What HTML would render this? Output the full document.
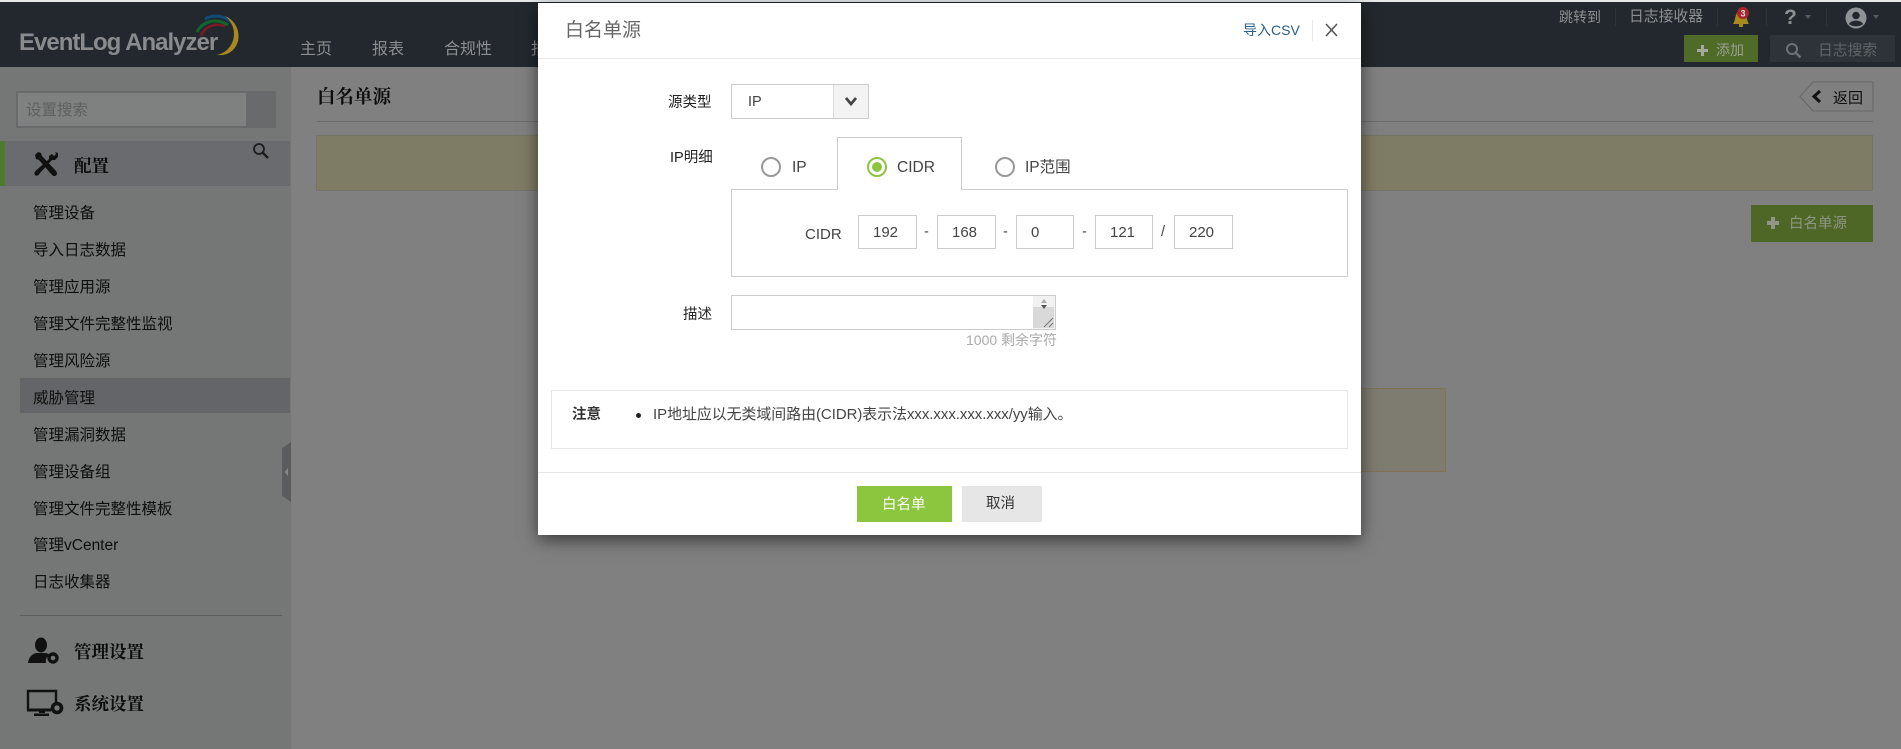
<!DOCTYPE html>
<html><head><meta charset="utf-8"><style>
html,body{margin:0;padding:0;width:1901px;height:749px;overflow:hidden;background:#808080}
*{box-sizing:border-box}
body{font-family:"Liberation Sans","WenQuanYi Zen Hei","Noto Sans CJK SC",sans-serif;font-size:15px;color:#111}
.a{position:absolute}
.t{position:absolute;white-space:nowrap;line-height:20px;height:20px}
.side{font-size:15.5px;color:#0e0e0e;left:33px}
.nav{font-size:16px;color:#8c8f91;top:40px}
.b{font-weight:bold;font-family:"Liberation Serif","Noto Serif CJK SC",serif}
.in{position:absolute;top:215px;height:34px;border:1px solid #ccc;background:#fff;font-size:15px;line-height:34px;padding-left:14px;color:#444}
.sep{position:absolute;width:1px;background:#2e3439}
.m{position:absolute;color:#444;font-size:14.5px;white-space:nowrap;line-height:20px}
.radio{position:absolute;width:20px;height:20px;border:2px solid #999;border-radius:50%;background:#fff;top:157px}
</style></head><body>
<div class="a" style="left:0;top:0;width:1901px;height:2px;background:#e6e8ea"></div>
<div class="a" style="left:0;top:2px;width:1901px;height:65px;background:#22282d"></div>
<div class="a" style="left:0;top:67px;width:291px;height:682px;background:#747776"></div>

<!-- logo -->
<div class="t" style="left:19px;top:28px;height:30px;line-height:30px;font-size:24px;font-weight:bold;color:#898b8d;letter-spacing:-1px">EventLog Analyzer</div>
<svg class="a" style="left:195px;top:12px" width="50" height="48" viewBox="0 0 50 48" fill="none">
<path d="M6 24 C9 16 18 10 30 14" stroke="#7d1a22" stroke-width="2.5"/>
<path d="M2 20 C7 10 20 5 33 13" stroke="#10652f" stroke-width="3"/>
<path d="M10 7 C18 2 31 3 38 12" stroke="#124a78" stroke-width="3"/>
<path d="M30 4 C42 9 46 22 42 32 C38 41 30 44 22 43 C32 41 39 32 39 22 C39 14 35 8 30 4Z" fill="#a8891f"/>
</svg>

<div class="t nav" style="left:300px">主页</div>
<div class="t nav" style="left:372px">报表</div>
<div class="t nav" style="left:444px">合规性</div>
<div class="t nav" style="left:531px">报警</div>

<!-- header right -->
<div class="t" style="left:1559px;top:7px;font-size:14px;color:#8d9092">跳转到</div>
<div class="sep" style="left:1615px;top:8px;height:18px"></div>
<div class="t" style="left:1629px;top:7px;font-size:14.8px;color:#8d9092">日志接收器</div>
<div class="sep" style="left:1717px;top:8px;height:18px"></div>
<svg class="a" style="left:1730px;top:6px" width="22" height="21" viewBox="0 0 22 21"><path d="M3 18 C5 15 5 12 6 9 C7 5 10 4 11 4 C13 4 15 6 16 9 C17 12 17 15 19 18Z" fill="#a98a1c"/><rect x="9" y="18" width="4" height="3" fill="#a98a1c"/><circle cx="13" cy="7" r="6" fill="#a9232b"/><text x="13" y="10.5" font-size="9" font-weight="bold" fill="#ddd" text-anchor="middle" font-family="Liberation Sans">3</text></svg>
<div class="sep" style="left:1766px;top:8px;height:18px"></div>
<div class="t" style="left:1784px;top:8px;font-size:21px;font-weight:bold;color:#8d9092">?</div>
<div class="a" style="left:1805px;top:15px;border:3.5px solid transparent;border-top:4px solid #555a5e"></div>
<div class="sep" style="left:1826px;top:8px;height:18px"></div>
<svg class="a" style="left:1845px;top:7px" width="22" height="22" viewBox="0 0 22 22"><circle cx="11" cy="11" r="10.5" fill="#909395"/><circle cx="11" cy="8.5" r="3.8" fill="#22282d"/><path d="M4 17 C6 12.5 16 12.5 18 17 C15 20 7 20 4 17Z" fill="#22282d"/></svg>
<div class="a" style="left:1873px;top:15px;border:3.5px solid transparent;border-top:4px solid #555a5e"></div>

<div class="a" style="left:1684px;top:35px;width:74px;height:27px;background:#4f6b27"></div>
<svg class="a" style="left:1697px;top:45px" width="11" height="11" viewBox="0 0 11 11" fill="#a5aaa0"><rect x="4" y="0" width="3" height="11"/><rect x="0" y="4" width="11" height="3"/></svg>
<div class="t" style="left:1716px;top:40px;font-size:14px;color:#9aa090">添加</div>
<div class="a" style="left:1770px;top:35px;width:125px;height:27px;background:#2d3338"></div>
<svg class="a" style="left:1785px;top:42px" width="17" height="17" viewBox="0 0 17 17" fill="none" stroke="#6b7074" stroke-width="2"><circle cx="7" cy="7" r="5"/><path d="M10.5 10.5L15.5 15.5" stroke-width="2.5"/></svg>
<div class="t" style="left:1818px;top:41px;font-size:14.8px;color:#5f6468">日志搜索</div>

<!-- sidebar -->
<div class="a" style="left:16px;top:91px;width:260px;height:37px;background:#686a6c"></div>
<div class="a" style="left:18px;top:93px;width:228px;height:33px;background:#7f8180"></div>
<div class="t" style="left:26px;top:101px;font-size:15.5px;color:#5e6060">设置搜索</div>
<div class="a" style="left:0;top:141px;width:290px;height:45px;background:#696b6e"></div>
<div class="a" style="left:0;top:141px;width:5px;height:45px;background:#4f7a2e"></div>
<svg class="a" style="left:252px;top:142px" width="17" height="17" viewBox="0 0 17 17" fill="none" stroke="#1c1c1c" stroke-width="1.8"><circle cx="7" cy="7" r="5"/><path d="M10.5 10.5L16 16" stroke-width="2.4"/></svg>
<svg class="a" style="left:33px;top:151px" width="26" height="26" viewBox="0 0 26 26" fill="#111"><path d="M2 4 L5 1 L8 2 L9 5 L23 20 Q25 23 23 24.5 Q21 26 19 24 L6 9 L3 8Z"/><path d="M22 1 L25 2 L25 6 L22 9 L19 9 L7 22 Q5 25.5 2.5 24.5 Q0 22 3 19.5 L16 8 L16 5 L19 3 L21 5 L23 3Z"/></svg>
<div class="t b" style="left:74px;top:156px;font-size:17.5px;color:#0c0c0c">配置</div>

<div class="a" style="left:20px;top:378px;width:270px;height:35px;background:#646568"></div>
<div class="t side" style="top:204px">管理设备</div>
<div class="t side" style="top:241px">导入日志数据</div>
<div class="t side" style="top:278px">管理应用源</div>
<div class="t side" style="top:315px">管理文件完整性监视</div>
<div class="t side" style="top:352px">管理风险源</div>
<div class="t side" style="top:389px">威胁管理</div>
<div class="t side" style="top:426px">管理漏洞数据</div>
<div class="t side" style="top:463px">管理设备组</div>
<div class="t side" style="top:500px">管理文件完整性模板</div>
<div class="t side" style="top:536px">管理vCenter</div>
<div class="t side" style="top:573px">日志收集器</div>
<div class="a" style="left:20px;top:615px;width:262px;height:1px;background:#5d605f"></div>

<svg class="a" style="left:282px;top:442px" width="9" height="60" viewBox="0 0 9 60"><path d="M9 0 L0 6 L0 54 L9 60Z" fill="#5a5c5e"/><path d="M6 26 L3 30 L6 34Z" fill="#8a8c8c"/></svg>

<svg class="a" style="left:27px;top:637px" width="34" height="27" viewBox="0 0 34 27" fill="#111"><ellipse cx="14" cy="8" rx="6" ry="7.5"/><path d="M1 26 Q2 18 9 16 L19 16 Q22 17 23 18 Q18 20 19 26Z"/><circle cx="26" cy="21" r="4" fill="none" stroke="#111" stroke-width="3.4"/></svg>
<div class="t b" style="left:74px;top:642px;font-size:17.5px;color:#0c0c0c">管理设置</div>
<svg class="a" style="left:26px;top:689px" width="40" height="28" viewBox="0 0 40 28" fill="none"><path d="M2 21 V2 H30 V14" stroke="#111" stroke-width="2.4"/><path d="M1 21 H25" stroke="#111" stroke-width="3"/><rect x="13" y="22" width="6" height="2" fill="#111"/><rect x="8" y="24.5" width="15" height="2.5" fill="#111"/><circle cx="31" cy="19" r="4.5" stroke="#111" stroke-width="3.6"/></svg>
<div class="t b" style="left:74px;top:694px;font-size:17.5px;color:#0c0c0c">系统设置</div>

<!-- main -->
<div class="t b" style="left:317px;top:86px;font-size:18.5px;line-height:24px;height:24px;color:#0d0d0d">白名单源</div>
<div class="a" style="left:317px;top:121px;width:1556px;height:1px;background:#6c6c6c"></div>
<svg class="a" style="left:1799px;top:81px" width="75" height="31" viewBox="0 0 75 31"><path d="M74 1 H14 L1 15.5 L14 30 H74Z" fill="#808080" stroke="#666"/><path d="M21 10 L15 15.5 L21 21" fill="none" stroke="#111" stroke-width="3"/></svg>
<div class="t" style="left:1833px;top:89px;font-size:15px;color:#0e0e0e">返回</div>
<div class="a" style="left:316px;top:135px;width:1557px;height:56px;background:#7f7c65;border:1px solid #757467"></div>
<div class="a" style="left:1751px;top:205px;width:122px;height:37px;background:#4f6726"></div>
<svg class="a" style="left:1767px;top:217px" width="12" height="12" viewBox="0 0 12 12" fill="#90968a"><rect x="4" y="0" width="4" height="12"/><rect x="0" y="4" width="12" height="4"/></svg>
<div class="t" style="left:1789px;top:214px;font-size:14.5px;color:#8f9584">白名单源</div>
<div class="a" style="left:1300px;top:388px;width:146px;height:84px;background:#7e7c70;border:1px solid #7f7256"></div>

<!-- modal -->
<div class="a" style="left:538px;top:3px;width:823px;height:532px;background:#fff;box-shadow:0 5px 16px rgba(0,0,0,.55)"></div>
<div class="t" style="left:565px;top:21px;font-size:19px;color:#666">白名单源</div>
<div class="a" style="left:538px;top:58px;width:823px;height:1px;background:#e8e8e8"></div>
<div class="t" style="left:1243px;top:20px;font-size:14px;color:#2b5f8a">导入CSV</div>
<div class="a" style="left:1312px;top:20px;width:1px;height:21px;background:#e8e8e8"></div>
<svg class="a" style="left:1325px;top:23px" width="13" height="14" viewBox="0 0 13 14" fill="none" stroke="#555" stroke-width="1.6"><path d="M1 1L12 13M12 1L1 13"/></svg>

<div class="m" style="left:668px;top:93px;color:#222">源类型</div>
<div class="a" style="left:731px;top:84px;width:138px;height:35px;border:1px solid #ccc;background:#fff"></div>
<div class="a" style="left:833px;top:85px;width:35px;height:33px;background:#f3f3f3;border-left:1px solid #ddd"></div>
<svg class="a" style="left:844px;top:96px" width="14" height="11" viewBox="0 0 14 11" fill="none" stroke="#444" stroke-width="2.8"><path d="M2 2L7 8L12 2"/></svg>
<div class="m" style="left:748px;top:92px">IP</div>

<div class="m" style="left:670px;top:148px;color:#222">IP明细</div>
<div class="a" style="left:731px;top:189px;width:617px;height:88px;border:1px solid #ccc;background:#fff"></div>
<div class="a" style="left:837px;top:137px;width:125px;height:53px;border:1px solid #ccc;border-bottom:none;background:#fff"></div>
<div class="radio" style="left:761px"></div>
<div class="m" style="left:792px;top:158px;font-size:15.5px">IP</div>
<div class="radio" style="left:867px;border-color:#8cc63f"></div>
<div class="a" style="left:872px;top:162px;width:10px;height:10px;border-radius:50%;background:#8cc63f"></div>
<div class="m" style="left:897px;top:158px;font-size:15.5px">CIDR</div>
<div class="radio" style="left:995px"></div>
<div class="m" style="left:1025px;top:158px;font-size:15.5px">IP范围</div>

<div class="m" style="left:805px;top:225px;font-size:15px">CIDR</div>
<div class="in" style="left:858px;width:59px">192</div>
<div class="m" style="left:924px;top:222px">-</div>
<div class="in" style="left:937px;width:59px">168</div>
<div class="m" style="left:1003px;top:222px">-</div>
<div class="in" style="left:1016px;width:58px">0</div>
<div class="m" style="left:1082px;top:222px">-</div>
<div class="in" style="left:1095px;width:58px">121</div>
<div class="m" style="left:1161px;top:222px">/</div>
<div class="in" style="left:1174px;width:59px">220</div>

<div class="m" style="left:683px;top:305px;color:#222">描述</div>
<div class="a" style="left:731px;top:295px;width:325px;height:35px;border:1px solid #ccc;background:#fff"></div>
<div class="a" style="left:1033px;top:296px;width:22px;height:33px;background:#f1f1f1"></div>
<div class="a" style="left:1033px;top:307px;width:21px;height:21px;background:#d9d9d9"></div>
<svg class="a" style="left:1033px;top:296px" width="22" height="33" viewBox="0 0 22 33"><path d="M11 3L8 7H14Z" fill="#aaa"/><path d="M8 9H14L11 13Z" fill="#555"/><path d="M11 31L20 22M16 31L20 27" stroke="#777" fill="none"/></svg>
<div class="m" style="left:966px;top:330px;color:#aaa;font-size:14px">1000 剩余字符</div>

<div class="a" style="left:551px;top:390px;width:797px;height:59px;border:1px solid #e6e6e6;background:#fff"></div>
<div class="m" style="left:572px;top:405px;color:#333;font-weight:bold">注意</div>
<div class="a" style="left:636px;top:413px;width:5px;height:5px;border-radius:50%;background:#222"></div>
<div class="m" style="left:653px;top:405px;color:#444;font-size:14.9px">IP地址应以无类域间路由(CIDR)表示法xxx.xxx.xxx.xxx/yy输入。</div>
<div class="a" style="left:538px;top:472px;width:823px;height:1px;background:#e4e9e8"></div>
<div class="a" style="left:857px;top:486px;width:95px;height:36px;background:#8cc63f"></div>
<div class="m" style="left:882px;top:495px;color:#fff">白名单</div>
<div class="a" style="left:962px;top:486px;width:80px;height:36px;background:#e6e6e6"></div>
<div class="m" style="left:986px;top:494px;color:#333">取消</div>
</body></html>
